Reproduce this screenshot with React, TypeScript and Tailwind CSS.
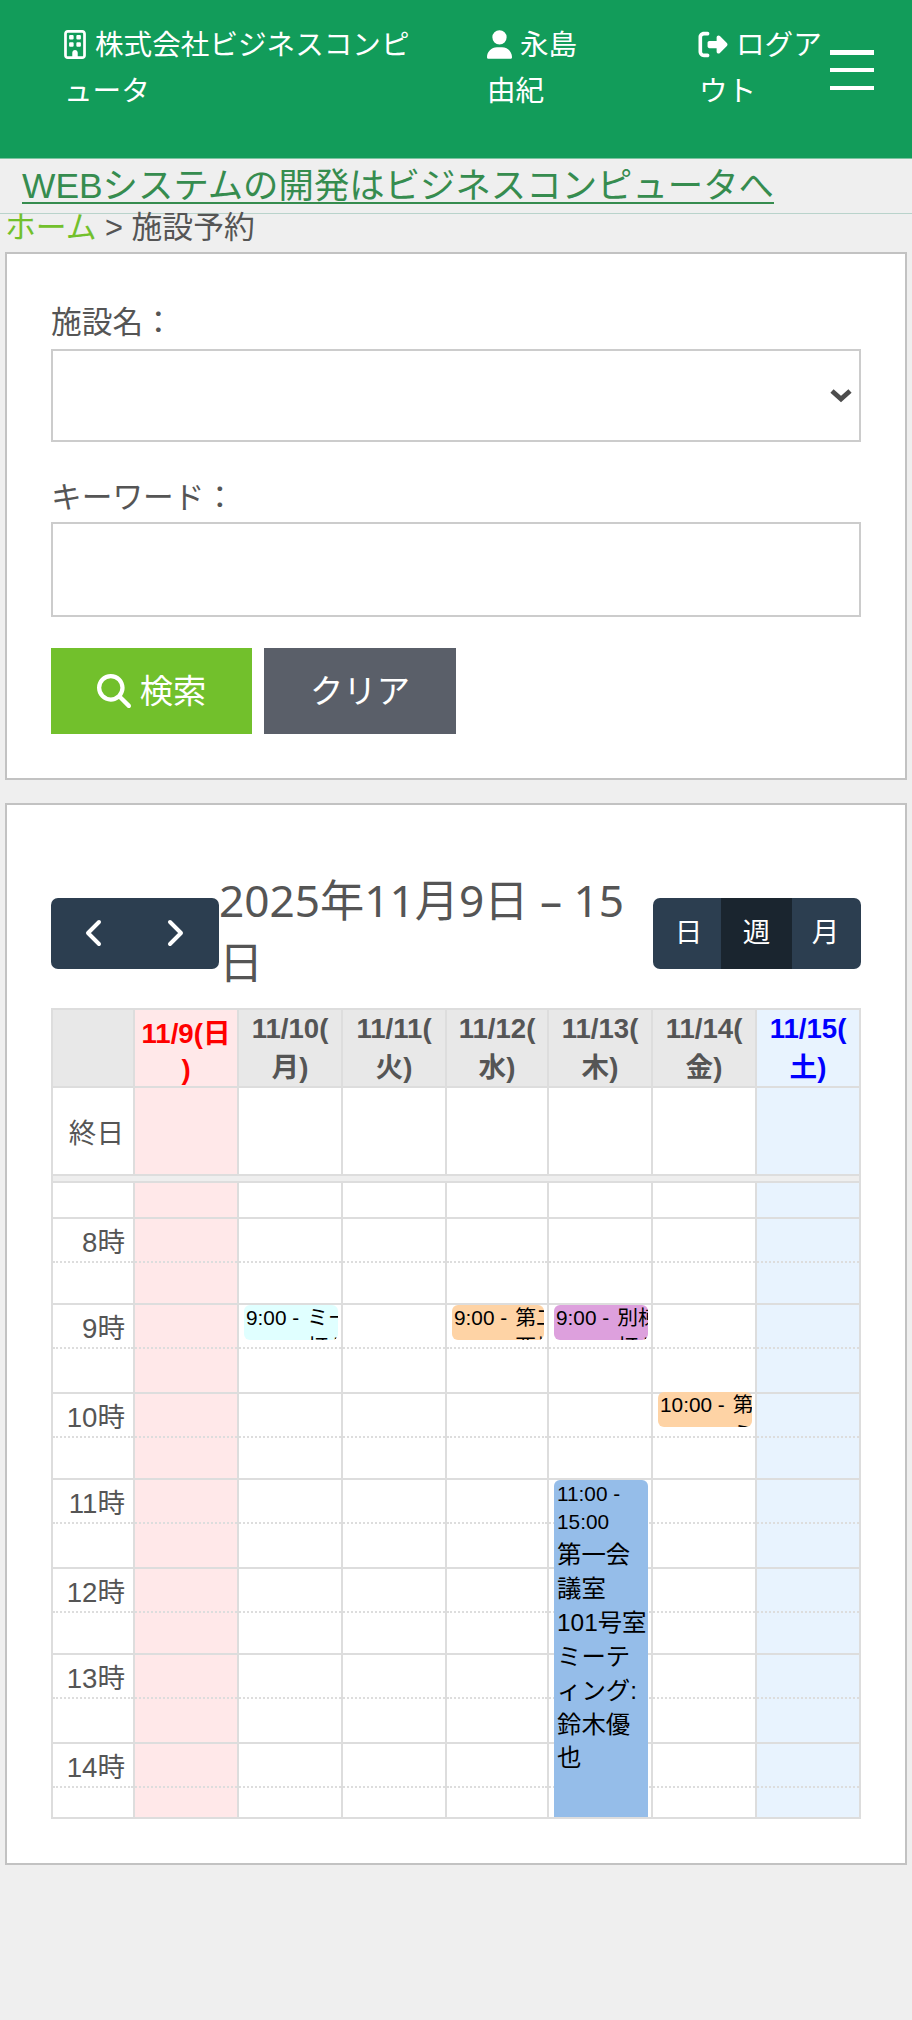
import type { ReactNode } from 'react';
import { clsx } from 'clsx';
import { FaMagnifyingGlass, FaRegBuilding, FaRightFromBracket, FaUser } from 'react-icons/fa6';

type DayKind = 'sun' | 'sat' | 'weekday';

interface Day {
  date: string;
  tail: string;
  kind: DayKind;
}

interface CalendarEvent {
  day: number;
  hour: number;
  time: string;
  lines: string[];
  color: string;
  long?: boolean;
}

const DAYS: Day[] = [
  { date: '11/9(日', tail: ')', kind: 'sun' },
  { date: '11/10(', tail: '月)', kind: 'weekday' },
  { date: '11/11(', tail: '火)', kind: 'weekday' },
  { date: '11/12(', tail: '水)', kind: 'weekday' },
  { date: '11/13(', tail: '木)', kind: 'weekday' },
  { date: '11/14(', tail: '金)', kind: 'weekday' },
  { date: '11/15(', tail: '土)', kind: 'sat' },
];

const HOURS = [
  { hour: 8, rows: 'grid-rows-[44px_42px]' },
  { hour: 9, rows: 'grid-rows-[44px_45px]' },
  { hour: 10, rows: 'grid-rows-[44px_42px]' },
  { hour: 11, rows: 'grid-rows-[44px_45px]' },
  { hour: 12, rows: 'grid-rows-[44px_42px]' },
  { hour: 13, rows: 'grid-rows-[44px_45px]' },
  { hour: 14, rows: 'grid-rows-[44px_31px]' },
];

const EVENTS: CalendarEvent[] = [
  { day: 1, hour: 9, time: '9:00 -', lines: ['ミー', '打ち'], color: 'top-[2px] bg-[#e0ffff]' },
  { day: 3, hour: 9, time: '9:00 -', lines: ['第二', '西棟'], color: 'top-[2px] bg-[#fed3a5]' },
  { day: 4, hour: 9, time: '9:00 -', lines: ['別棟', '打ち'], color: 'top-[2px] bg-[#dda0dd]' },
  { day: 5, hour: 10, time: '10:00 -', lines: ['第', 'ミ'], color: 'top-0 bg-[#fed3a5]' },
  {
    day: 4,
    hour: 11,
    time: '11:00 - 15:00',
    lines: ['第一会', '議室', '101号室', 'ミーテ', 'ィング:', '鈴木優', '也'],
    color: 'top-[2px] bg-[#95bde9]',
    long: true,
  },
];

const COLUMNS = 'grid grid-cols-[82px_104px_104px_104px_102px_104px_104px_104px]';

const DAY_BG: Record<DayKind, string> = {
  sun: 'bg-[#ffe8e9]',
  sat: 'bg-[#e8f3fe]',
  weekday: '',
};

const HEAD_STYLE: Record<DayKind, string> = {
  sun: 'bg-[#ffe8e9] text-[#ff0000] pt-[6px] leading-[36px]',
  sat: 'bg-[#e8f3fe] text-[#0000ff] leading-[39px] -mt-px',
  weekday: 'bg-[#e8e8e8] leading-[39px] -mt-px',
};

function Header() {
  return (
    <header className="flex h-[159px] bg-[#129c5a] border-b border-[#7cc3a0] pt-[22px] pl-[64px] text-[28.6px] leading-[46px] text-white">
      <div className="w-[423px]">
        <FaRegBuilding className="inline -mt-1.5 mr-[9px] w-[22px] h-[29px]" />
        株式会社ビジネスコンピ
        <br />
        ュータ
      </div>
      <div className="w-[211px]">
        <FaUser className="inline -mt-1.5 mr-[8px] w-[25px] h-[29px]" />
        永島
        <br />
        由紀
      </div>
      <div className="w-[132px] whitespace-nowrap">
        <FaRightFromBracket className="inline -mt-1.5 mr-[8px] w-[30px] h-[29px]" />
        ログア
        <br />
        <span className="pl-px">ウト</span>
      </div>
      <button className="mt-[28px] flex h-[40px] w-11 flex-col justify-between" aria-label="メニュー">
        <span className="h-[4.5px] w-full bg-white" />
        <span className="h-[4.5px] w-full bg-white" />
        <span className="h-[4.5px] w-full bg-white" />
      </button>
    </header>
  );
}

function SearchPanel() {
  return (
    <section className="mx-[5px] h-[528px] border-2 border-[#c2c2c2] bg-white px-[44px] pt-[46px]">
      <label className="block h-[49px] text-[30.7px] leading-[46px]">施設名：</label>
      <div className="flex h-[93px] items-center justify-end border-2 border-[#ccc] pr-[7px]">
        <svg className="h-[14px] w-[22px]" viewBox="0 0 22 14" fill="none" stroke="#4d4d4d" strokeWidth="4.8">
          <path d="M2 2 L11 10 L20 2" />
        </svg>
      </div>
      <label className="mt-[33px] block h-[47px] text-[30.7px] leading-[45px]">キーワード：</label>
      <input className="block h-[95px] w-full border-2 border-[#ccc]" />
      <div className="mt-[31px] flex gap-[12px] text-[33.3px] text-white">
        <button className="flex h-[86px] w-[201px] items-center justify-center gap-[9px] bg-[#72c02c]">
          <FaMagnifyingGlass className="h-[34px] w-[34px]" />
          <span className="pt-px">検索</span>
        </button>
        <button className="h-[86px] w-[192px] bg-[#5a5f69] pt-px">クリア</button>
      </div>
    </section>
  );
}

function Toolbar() {
  return (
    <div className="flex items-center text-[27.6px] text-white">
      <div className="flex h-[71px] w-[168px] items-center rounded-[7px] bg-[#2c3e50]">
        <button className="w-[84px] pl-[33px]" aria-label="前へ">
          <svg className="h-[28px] w-[18px]" viewBox="0 0 18 28" fill="none" stroke="white" strokeWidth="4" strokeLinecap="round" strokeLinejoin="round">
            <path d="M15 3 L4 14 L15 25" />
          </svg>
        </button>
        <button className="w-[84px] pl-[32px]" aria-label="次へ">
          <svg className="h-[28px] w-[18px]" viewBox="0 0 18 28" fill="none" stroke="white" strokeWidth="4" strokeLinecap="round" strokeLinejoin="round">
            <path d="M3 3 L14 14 L3 25" />
          </svg>
        </button>
      </div>
      <h2 className="-mt-[2px] mb-[2px] w-[434px] whitespace-nowrap font-['Noto_Sans','Noto_Sans_CJK_JP',sans-serif] text-[44.2px] leading-[62px] text-[#555]">
        2025年11月9日 – 15
        <br />日
      </h2>
      <div className="grid h-[71px] w-[208px] grid-cols-[68px_71px_69px] overflow-hidden rounded-[7px] bg-[#2c3e50]">
        <button className="pl-[3px]">日</button>
        <button className="bg-[#1a252f]">週</button>
        <button className="pr-[2px]">月</button>
      </div>
    </div>
  );
}

function EventBlock({ event }: { event: CalendarEvent }) {
  return (
    <div
      className={clsx(
        'absolute left-[5px] right-[3px] z-10 overflow-hidden pl-[2px] text-[20.8px] text-black',
        event.color,
        event.long ? 'h-[337px] rounded-t-[6px]' : 'flex h-[35px] rounded-[6px]',
      )}
    >
      {event.long ? (
        <div className="pl-px">
          <div className="w-[70px] leading-[28px]">{event.time}</div>
          <div className="whitespace-nowrap pt-[2px] text-[24.4px] leading-[33.9px]">
            {event.lines.map((line) => (
              <div key={line}>{line}</div>
            ))}
          </div>
        </div>
      ) : (
        <>
          <div className="mr-[8px] shrink-0 leading-[25px]">{event.time}</div>
          <div className="-mt-[2px] shrink-0 leading-[29px]">
            {event.lines.map((line) => (
              <div key={line}>{line}</div>
            ))}
          </div>
        </>
      )}
    </div>
  );
}

function Cell({ kind, className, children }: { kind: DayKind; className?: string; children?: ReactNode }) {
  return <div className={clsx('border-l-2 border-[#ddd]', DAY_BG[kind], className)}>{children}</div>;
}

function WeekCalendar() {
  return (
    <div className="mt-[9px] w-[810px] border-r-2 border-b-2 border-[#ddd] text-[27.6px]">
      <div className={clsx(COLUMNS, 'h-[78px] grid-rows-[76px] overflow-hidden border-t-2 border-[#ddd] text-center font-bold')}>
        <div className="border-l-2 border-[#ddd] bg-[#e8e8e8]" />
        {DAYS.map((day) => (
          <div key={day.date} className={clsx('border-l-2 border-[#ddd]', HEAD_STYLE[day.kind])}>
            <div>{day.date}</div>
            <div>{day.tail}</div>
          </div>
        ))}
      </div>
      <div className={clsx(COLUMNS, 'h-[88px] grid-rows-[86px] border-t-2 border-[#ddd]')}>
        <Cell kind="weekday" className="overflow-hidden pr-[9px] text-right leading-[92px]">終日</Cell>
        {DAYS.map((day) => (
          <Cell key={day.date} kind={day.kind} />
        ))}
      </div>
      <div className="h-[9px] border-y-2 border-l-2 border-[#ddd] bg-[#eee]" />
      <div className="overflow-hidden">
        <div className={clsx(COLUMNS, 'h-[34px]')}>
          <Cell kind="weekday" />
          {DAYS.map((day) => (
            <Cell key={day.date} kind={day.kind} />
          ))}
        </div>
        {HOURS.map(({ hour, rows }) => (
          <div key={hour} className={COLUMNS}>
            <Cell kind="weekday" className={clsx('grid', rows)}>
              <div className="border-t-2 border-[#ddd] pr-[8px] text-right leading-[47px]">{hour}時</div>
              <div className="border-t-2 border-dotted border-[#ddd]" />
            </Cell>
            {DAYS.map((day, index) => (
              <Cell key={day.date} kind={day.kind} className={clsx('relative grid', rows)}>
                <div className="border-t-2 border-[#ddd]" />
                <div className="border-t-2 border-dotted border-[#ddd]" />
                {EVENTS.filter((e) => e.day === index && e.hour === hour).map((event) => (
                  <EventBlock key={event.time} event={event} />
                ))}
              </Cell>
            ))}
          </div>
        ))}
      </div>
    </div>
  );
}

export default function App() {
  return (
    <div className="h-[2020px] w-[912px] overflow-hidden bg-[#efefef] font-['Liberation_Sans','Noto_Sans_CJK_JP',sans-serif] text-[#555]">
      <Header />
      <div className="h-[55px] border-b border-[#b9d3cb] pl-[22px] text-[35.4px] leading-[54px]">
        <a className="text-[#368c4f] underline decoration-2 underline-offset-[4px]">
          WEBシステムの開発はビジネスコンピュータへ
        </a>
      </div>
      <nav className="h-[38px] pl-[5px] text-[30.8px] leading-[27px]">
        <a className="text-[#72c02c]">ホーム</a> &gt; 施設予約
      </nav>
      <SearchPanel />
      <section className="mx-[5px] mt-[23px] h-[1062px] border-2 border-[#c2c2c2] bg-white px-[44px] pt-[66px]">
        <Toolbar />
        <div className="h-[4px]" />
        <WeekCalendar />
      </section>
    </div>
  );
}
